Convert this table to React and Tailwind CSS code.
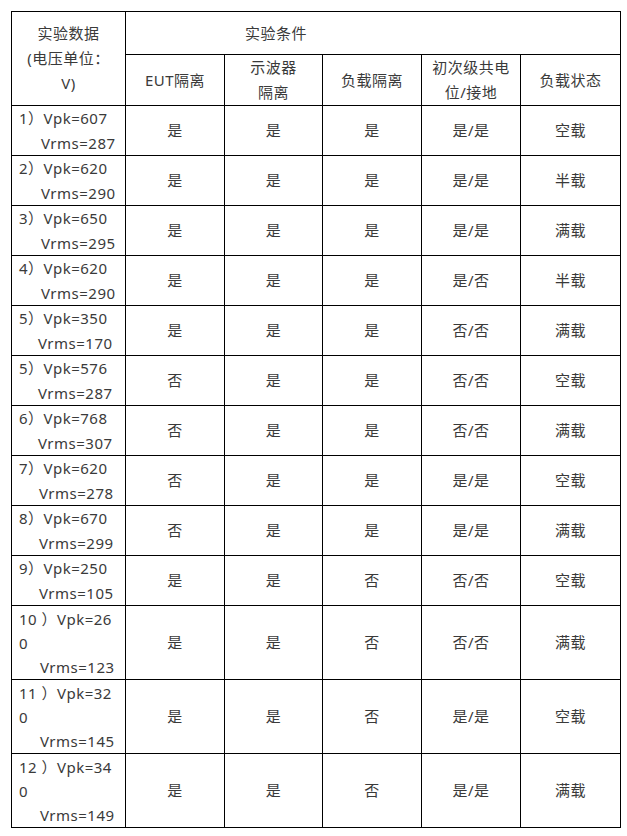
import React from "react";

const rows = [
  { a: "1）Vpk=607", b: "Vrms=287", ind: "pl-[22px]", c: ["是", "是", "是", "是/是", "空载"] },
  { a: "2）Vpk=620", b: "Vrms=290", ind: "pl-[22px]", c: ["是", "是", "是", "是/是", "半载"] },
  { a: "3）Vpk=650", b: "Vrms=295", ind: "pl-[22px]", c: ["是", "是", "是", "是/是", "满载"] },
  { a: "4）Vpk=620", b: "Vrms=290", ind: "pl-[22px]", c: ["是", "是", "是", "是/否", "半载"] },
  { a: "5）Vpk=350", b: "Vrms=170", ind: "pl-[19px]", c: ["是", "是", "是", "否/否", "满载"] },
  { a: "5）Vpk=576", b: "Vrms=287", ind: "pl-[19px]", c: ["否", "是", "是", "否/否", "空载"] },
  { a: "6）Vpk=768", b: "Vrms=307", ind: "pl-[19px]", c: ["否", "是", "是", "否/否", "满载"] },
  { a: "7）Vpk=620", b: "Vrms=278", ind: "pl-[20px]", c: ["否", "是", "是", "是/是", "空载"] },
  { a: "8）Vpk=670", b: "Vrms=299", ind: "pl-[20px]", c: ["否", "是", "是", "是/是", "满载"] },
  { a: "9）Vpk=250", b: "Vrms=105", ind: "pl-[20px]", c: ["是", "是", "否", "否/否", "空载"] },
  { a: "10 ）Vpk=26", a2: "0", b: "Vrms=123", ind: "pl-[21px]", c: ["是", "是", "否", "否/否", "满载"] },
  { a: "11 ）Vpk=32", a2: "0", b: "Vrms=145", ind: "pl-[21px]", c: ["是", "是", "否", "是/是", "空载"] },
  { a: "12 ）Vpk=34", a2: "0", b: "Vrms=149", ind: "pl-[21px]", c: ["是", "是", "否", "是/是", "满载"] },
];

const font = { fontFamily: '"Noto Sans", "Noto Sans CJK SC", sans-serif' };

export default function App() {
  return (
    <div className="bg-white w-[627px] h-[836px] pt-[11px] pl-[11px]" style={font}>
      <table className="border-collapse table-fixed w-[609px] text-[15px] leading-[25px] tracking-[0.5px] text-[#3a3a3a]">
        <colgroup>
          <col className="w-[114px]" />
          <col className="w-[99px]" />
          <col className="w-[98px]" />
          <col className="w-[99px]" />
          <col className="w-[99px]" />
          <col className="w-[100px]" />
        </colgroup>
        <tbody>
          <tr className="h-[43px]">
            <td rowSpan={2} className="border border-black text-center align-middle p-0">
              <div>实验数据</div>
              <div>(电压单位：</div>
              <div>V)</div>
            </td>
            <td colSpan={5} className="border border-black text-left align-middle p-0 pl-[119px]">
              实验条件
            </td>
          </tr>
          <tr className="h-[51px]">
            <td className="border border-black text-center align-middle p-0">EUT隔离</td>
            <td className="border border-black text-center align-middle p-0">
              <div>示波器</div>
              <div>隔离</div>
            </td>
            <td className="border border-black text-center align-middle p-0">负载隔离</td>
            <td className="border border-black text-center align-middle p-0">
              <div>初次级共电</div>
              <div>位/接地</div>
            </td>
            <td className="border border-black text-center align-middle p-0">负载状态</td>
          </tr>
          {rows.map((r, i) => (
            <tr key={i} className={r.a2 ? "h-[74px]" : "h-[50px]"}>
              <td
                className={
                  "border border-black align-middle p-0 pl-[7px] whitespace-nowrap " +
                  (r.a2 ? "leading-[24px]" : "leading-[24.5px]")
                }
              >
                <div>{r.a}</div>
                {r.a2 && <div>{r.a2}</div>}
                <div className={r.ind}>{r.b}</div>
              </td>
              {r.c.map((v, j) => (
                <td key={j} className="border border-black text-center align-middle p-0">
                  {v}
                </td>
              ))}
            </tr>
          ))}
        </tbody>
      </table>
    </div>
  );
}
